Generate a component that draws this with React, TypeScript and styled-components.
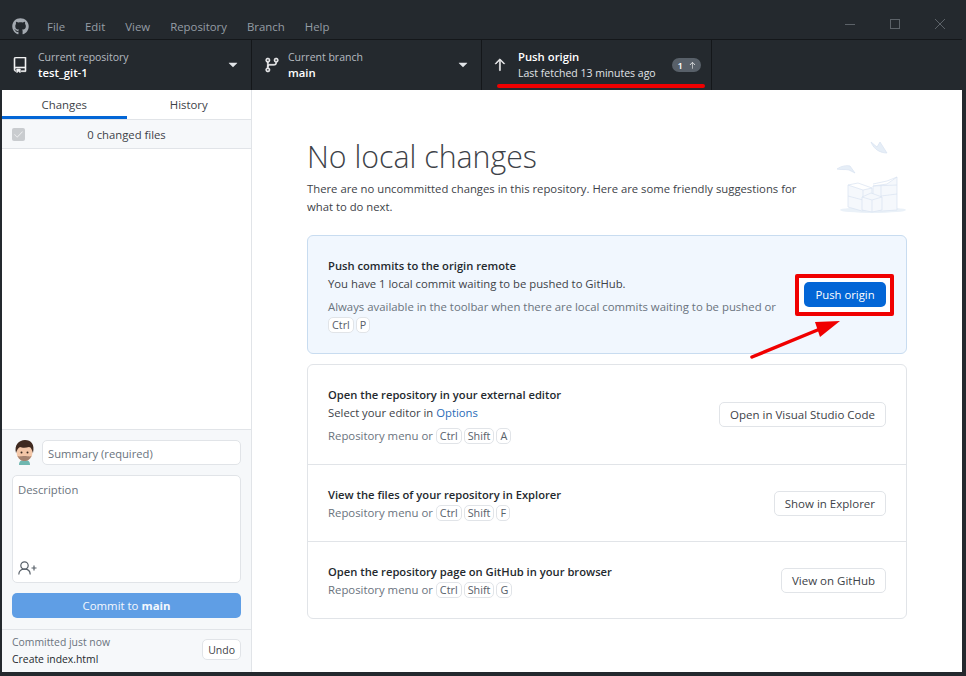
import React from 'react';
import styled, { createGlobalStyle } from 'styled-components';
import { FaGithub } from 'react-icons/fa';
import { GoRepo, GoGitBranch, GoArrowUp, GoTriangleDown, GoCheck } from 'react-icons/go';

const GlobalStyle = createGlobalStyle`
  html, body {
    margin: 0;
    padding: 0;
    width: 966px;
    height: 676px;
    overflow: hidden;
    background: #24292e;
  }
  * { box-sizing: border-box; }
  body {
    font-family: "Open Sans", "Noto Sans", sans-serif;
    font-size: 11.3px;
    color: #24292e;
  }
`;

const Window = styled.div`
  width: 966px;
  height: 676px;
  display: flex;
  flex-direction: column;
  padding: 0 4px 4px 2px;
  background: #24292e;
`;

const TitleBar = styled.header`
  height: 40px;
  margin-left: -2px;
  flex: none;
  display: flex;
  align-items: flex-end;
  border-bottom: 1px solid #14171a;
  padding: 0 0 2px 12px;
  color: #959da5;
`;

const Logo = styled(FaGithub)`
  width: 17px;
  height: 17px;
  color: #a3a9b0;
  margin-bottom: 2px;
`;

const Menu = styled.nav`
  display: flex;
  margin-left: 18px;
  gap: 20px;
  font-size: 11.4px;
  line-height: 20px;
`;

const WindowControls = styled.div`
  margin-left: auto;
  display: flex;
  align-items: center;
  gap: 33px;
  padding: 0 16px 6px 0;
  height: 20px;
`;

const ControlIcon = styled.svg`
  width: 12px;
  height: 12px;
  stroke: #5c6268;
  fill: none;
  display: block;
`;

const Toolbar = styled.div`
  height: 50px;
  flex: none;
  display: flex;
  margin-left: -2px;
`;

const ToolbarItem = styled.div<{ $width: number }>`
  position: relative;
  width: ${({ $width }) => $width}px;
  display: flex;
  align-items: center;
  padding: 0 10px 0 12px;
  border-right: 1px solid #14171a;
  color: #fff;
`;

const ToolbarIcon = styled.span<{ $gap: number; $lead?: number }>`
  display: flex;
  font-size: 16px;
  margin-left: ${({ $lead }) => $lead ?? 0}px;
  margin-right: ${({ $gap }) => $gap}px;
  color: #f1f2f3;
  svg { stroke: currentColor; stroke-width: 0.9; }
`;

const ToolbarText = styled.div`
  flex: 1;
  display: flex;
  flex-direction: column;
  line-height: 16px;
`;

const ToolbarLabel = styled.span<{ $bright?: boolean }>`
  font-size: 10.5px;
  color: ${({ $bright }) => ($bright ? '#e1e4e8' : '#b5bac0')};
`;

const ToolbarValue = styled.span`
  font-size: 11.3px;
  font-weight: 600;
  color: #fff;
`;

const Caret = styled(GoTriangleDown)`
  color: #e1e4e8;
  font-size: 16px;
`;

const AheadBadge = styled.span`
  display: flex;
  align-items: center;
  gap: 5px;
  height: 14px;
  padding: 0 4px 0 6px;
  border-radius: 7px;
  background: #586069;
  font-size: 9.5px;
  font-weight: 600;
  color: #fff;
  svg { width: 9px; height: 9px; }
`;

const RedUnderline = styled.span`
  position: absolute;
  left: 15px;
  right: 6px;
  bottom: 2px;
  height: 4px;
  border-radius: 2px;
  background: #f00000;
`;

const Body = styled.div`
  flex: 1;
  min-height: 0;
  display: flex;
  background: #fff;
`;

const Sidebar = styled.aside`
  width: 250px;
  flex: none;
  display: flex;
  flex-direction: column;
  border-right: 1px solid #e1e4e8;
`;

const Tabs = styled.div`
  display: flex;
  height: 30px;
  flex: none;
  border-bottom: 1px solid #e1e4e8;
`;

const Tab = styled.div<{ $active?: boolean }>`
  flex: 1;
  display: flex;
  align-items: center;
  justify-content: center;
  font-size: 11.4px;
  color: #3d4248;
  box-shadow: ${({ $active }) => ($active ? 'inset 0 -3px 0 #0366d6' : 'none')};
`;

const ChangedRow = styled.div`
  height: 29px;
  flex: none;
  position: relative;
  display: flex;
  align-items: center;
  justify-content: center;
  background: #f6f8fa;
  border-bottom: 1px solid #e1e4e8;
  color: #3d4248;
`;

const DisabledCheck = styled.span`
  position: absolute;
  left: 10px;
  top: 8px;
  width: 13px;
  height: 13px;
  border-radius: 2px;
  background: #c9cccf;
  color: #f2f3f4;
  display: flex;
  align-items: center;
  justify-content: center;
`;

const FileList = styled.div`
  flex: 1;
`;

const CommitArea = styled.div`
  flex: none;
  height: 200px;
  padding: 10px 10px 10px;
  background: #f6f8fa;
  border-top: 1px solid #e1e4e8;
  display: flex;
  flex-direction: column;
`;

const SummaryRow = styled.div`
  display: flex;
  align-items: center;
  gap: 5px;
  height: 25px;
  margin-bottom: 10px;
`;

const Avatar = styled.svg`
  width: 25px;
  height: 25px;
  flex: none;
`;

const SummaryInput = styled.div`
  flex: 1;
  height: 25px;
  display: flex;
  align-items: center;
  padding: 1px 5px 0;
  background: #fff;
  border: 1px solid #e1e4e8;
  border-radius: 5px;
  font-size: 11.2px;
  color: #6a737d;
`;

const DescriptionBox = styled.div`
  height: 108px;
  flex: none;
  padding: 6px 5px 7px;
  background: #fff;
  border: 1px solid #e1e4e8;
  border-radius: 5px;
  color: #6a737d;
  display: flex;
  flex-direction: column;
  justify-content: space-between;
`;

const CoAuthorIcon = styled.svg`
  width: 19px;
  height: 14px;
  stroke: #586069;
  stroke-width: 1.2;
  fill: none;
`;

const CommitButton = styled.div`
  height: 25px;
  margin-top: 10px;
  flex: none;
  display: flex;
  align-items: center;
  justify-content: center;
  gap: 3px;
  border-radius: 5px;
  background: #5f9ee5;
  color: #f4f8fd;
  font-size: 11.4px;
  b { font-weight: 700; }
`;

const LastCommit = styled.div`
  flex: none;
  height: 43px;
  background: #f6f8fa;
  border-top: 1px solid #e1e4e8;
  padding: 0 10px;
  display: flex;
  align-items: center;
  justify-content: space-between;
`;

const LastCommitText = styled.div`
  display: flex;
  flex-direction: column;
  font-size: 10.4px;
  line-height: 17px;
`;

const Muted = styled.span`
  color: #6a737d;
`;

const SmallButton = styled.div`
  height: 21px;
  padding: 0 5px;
  margin-top: -3px;
  display: flex;
  align-items: center;
  background: #fff;
  border: 1px solid #e1e4e8;
  border-radius: 5px;
  font-size: 10.5px;
  color: #3d4248;
`;

const Main = styled.main`
  position: relative;
  flex: 1;
  min-width: 0;
  padding: 45px 55px 0 55px;
`;

const Heading = styled.div`
  display: flex;
  justify-content: space-between;
  height: 100px;
`;

const Title = styled.h1`
  margin: 0 0 1px;
  font-size: 30.3px;
  line-height: 44px;
  font-weight: 300;
  color: #3d4248;
`;

const Lead = styled.p`
  margin: 0;
  width: 505px;
  line-height: 18px;
  color: #3d4248;
`;

const Illustration = styled.svg`
  width: 72px;
  height: 76px;
  margin-top: 5px;
`;

const PushCard = styled.section`
  height: 119px;
  display: flex;
  align-items: center;
  justify-content: space-between;
  padding: 0 12px 0 20px;
  background: #f1f7fe;
  border: 1px solid #c8dcf0;
  border-radius: 6px;
`;

const CardGroup = styled.section`
  margin-top: 10px;
  border: 1px solid #e1e4e8;
  border-radius: 6px;
`;

const Row = styled.div<{ $height: number }>`
  height: ${({ $height }) => $height}px;
  display: flex;
  align-items: center;
  justify-content: space-between;
  padding: 0 20px;
  & + & { border-top: 1px solid #e1e4e8; }
`;

const RowText = styled.div`
  line-height: 18px;
  margin-top: 2px;
`;

const RowTitle = styled.div`
  font-weight: 600;
  font-size: 11.2px;
  color: #24292e;
`;

const RowBody = styled.div`
  color: #3d4248;
`;

const Hint = styled.div<{ $spaced?: boolean }>`
  margin-top: ${({ $spaced }) => ($spaced ? 5 : 0)}px;
  color: #6a737d;
  max-width: 455px;
  font-size: 11.37px;
  line-height: 18px;
`;

const Link = styled.span`
  color: #2a6bb8;
`;

const Kbd = styled.kbd`
  display: inline-block;
  margin-right: 2px;
  padding: 0 3px;
  line-height: 14px;
  font-family: inherit;
  font-size: 10.8px;
  color: #586069;
  background: #fff;
  border: 1px solid #e1e4e8;
  border-radius: 5px;
`;

const ActionButton = styled.div`
  height: 25px;
  padding: 0 10px;
  display: flex;
  align-items: center;
  flex: none;
  white-space: nowrap;
  font-size: 11.5px;
  background: #fff;
  border: 1px solid #e1e4e8;
  border-radius: 5px;
  color: #3d4248;
`;

const HighlightFrame = styled.div`
  flex: none;
  border: 4px solid #f00000;
  border-radius: 2px;
  padding: 4px 4px 5px 5px;
  background: #fff;
`;

const PrimaryButton = styled.div`
  width: 82px;
  height: 25px;
  padding-top: 1px;
  display: flex;
  align-items: center;
  justify-content: center;
  white-space: nowrap;
  background: #0366d6;
  border-radius: 5px;
  color: #fff;
`;

const ArrowOverlay = styled.svg`
  position: absolute;
  left: 498px;
  top: 228px;
  width: 92px;
  height: 42px;
`;

const Keys: React.FC<{ keys: string[] }> = ({ keys }) => (
  <>
    {keys.map(k => (
      <Kbd key={k}>{k}</Kbd>
    ))}
  </>
);

const rows = [
  {
    title: 'Open the repository in your external editor',
    keys: ['Ctrl', 'Shift', 'A'],
    action: 'Open in Visual Studio Code',
    height: 99,
  },
  {
    title: 'View the files of your repository in Explorer',
    keys: ['Ctrl', 'Shift', 'F'],
    action: 'Show in Explorer',
    height: 77,
  },
  {
    title: 'Open the repository page on GitHub in your browser',
    keys: ['Ctrl', 'Shift', 'G'],
    action: 'View on GitHub',
    height: 77,
  },
];

const App: React.FC = () => (
  <Window>
    <GlobalStyle />
    <TitleBar>
      <Logo />
      <Menu>
        <span>File</span>
        <span>Edit</span>
        <span>View</span>
        <span>Repository</span>
        <span>Branch</span>
        <span>Help</span>
      </Menu>
      <WindowControls>
        <ControlIcon viewBox="0 0 12 12"><path d="M1 6.500h10" /></ControlIcon>
        <ControlIcon viewBox="0 0 12 12"><rect x="1.500" y="1.500" width="9" height="9" /></ControlIcon>
        <ControlIcon viewBox="0 0 12 12"><path d="M1 1l10 10M11 1L1 11" /></ControlIcon>
      </WindowControls>
    </TitleBar>
    <Toolbar>
      <ToolbarItem $width={252}>
        <ToolbarIcon $gap={10}><GoRepo /></ToolbarIcon>
        <ToolbarText>
          <ToolbarLabel>Current repository</ToolbarLabel>
          <ToolbarValue>test_git-1</ToolbarValue>
        </ToolbarText>
        <Caret />
      </ToolbarItem>
      <ToolbarItem $width={230}>
        <ToolbarIcon $gap={8}><GoGitBranch /></ToolbarIcon>
        <ToolbarText>
          <ToolbarLabel>Current branch</ToolbarLabel>
          <ToolbarValue>main</ToolbarValue>
        </ToolbarText>
        <Caret />
      </ToolbarItem>
      <ToolbarItem $width={230}>
        <ToolbarIcon $gap={10} $lead={-2}><GoArrowUp /></ToolbarIcon>
        <ToolbarText>
          <ToolbarValue>Push origin</ToolbarValue>
          <ToolbarLabel $bright>Last fetched 13 minutes ago</ToolbarLabel>
        </ToolbarText>
        <AheadBadge>1<GoArrowUp /></AheadBadge>
        <RedUnderline />
      </ToolbarItem>
    </Toolbar>
    <Body>
      <Sidebar>
        <Tabs>
          <Tab $active>Changes</Tab>
          <Tab>History</Tab>
        </Tabs>
        <ChangedRow>
          <DisabledCheck><GoCheck size={11} /></DisabledCheck>
          0 changed files
        </ChangedRow>
        <FileList />
        <CommitArea>
          <SummaryRow>
            <Avatar viewBox="0 0 25 25">
              <path d="M7 25c0-4 2-5 5.500-5s5.500 1 5.500 5z" fill="#6fb7b0" />
              <ellipse cx="12.500" cy="12.500" rx="8" ry="8.500" fill="#f3c7a8" />
              <path d="M5.500 16c2 4 4 5 7 5s5-1 7-5c-2 1-4 0-7 0s-5 1-7 0z" fill="#a5836f" />
              <path d="M4 13C2 5 7 0 13 0s10 4 8 13c-1-3-2-6-4-6-3 1-7 1-9 0-2 1-3 3-4 6z" fill="#3f2a20" />
              <circle cx="9.500" cy="12.500" r="1" fill="#3a2a20" />
              <circle cx="15.500" cy="12.500" r="1" fill="#3a2a20" />
            </Avatar>
            <SummaryInput>Summary (required)</SummaryInput>
          </SummaryRow>
          <DescriptionBox>
            <span>Description</span>
            <CoAuthorIcon viewBox="0 0 19 14">
              <circle cx="6.500" cy="4.500" r="3.700" />
              <path d="M0.800 13.500c0-3.500 2.500-5.300 5.700-5.300s5.700 1.800 5.700 5.300" />
              <path d="M13.500 7h5M16 4.500v5" />
            </CoAuthorIcon>
          </DescriptionBox>
          <CommitButton>Commit to <b>main</b></CommitButton>
        </CommitArea>
        <LastCommit>
          <LastCommitText>
            <Muted>Committed just now</Muted>
            <span>Create index.html</span>
          </LastCommitText>
          <SmallButton>Undo</SmallButton>
        </LastCommit>
      </Sidebar>
      <Main>
        <Heading>
          <div>
            <Title>No local changes</Title>
            <Lead>There are no uncommitted changes in this repository. Here are some friendly suggestions for what to do next.</Lead>
          </div>
          <Illustration viewBox="0 0 72 76" fill="#f5f8fc" stroke="#d8e3f0" strokeWidth="0.7">
            <ellipse cx="38" cy="70" rx="33" ry="3" fill="#eaf1f8" stroke="none" />
            <path d="M36 2l6 5 3-5 7 11c-6 0-13-3-16-11z" fill="#e6eef7" />
            <path d="M2 29c4-3 10-4 13-3l5 7-6-3c-4-1-8 0-12-1z" fill="#e6eef7" />
            <path d="M13 45l15 5 9-2v22l-10 1-14-4z" />
            <path d="M13 45l10-2 14 5M28 50v21M13 56l15 4" fill="none" />
            <path d="M38 46l14-2 10-7v33l-15 1-9-1z" />
            <path d="M38 46l24-1M46 45v25M46 56l16-2M38 44l14-3 10-4" fill="none" />
            <path d="M27 57l9-4 11 4v13l-10 2-10-2z" />
            <path d="M27 57l10 3 10-3M37 60v12" fill="none" />
          </Illustration>
        </Heading>
        <PushCard>
          <RowText>
            <RowTitle>Push commits to the origin remote</RowTitle>
            <RowBody>You have 1 local commit waiting to be pushed to GitHub.</RowBody>
            <Hint $spaced>
              Always available in the toolbar when there are local commits waiting to be pushed or{' '}
              <Keys keys={['Ctrl', 'P']} />
            </Hint>
          </RowText>
          <HighlightFrame>
            <PrimaryButton>Push origin</PrimaryButton>
          </HighlightFrame>
        </PushCard>
        <CardGroup>
          {rows.map(row => {
            const hasEditor = row.action.startsWith('Open');
            return (
              <Row key={row.action} $height={row.height}>
                <RowText>
                  <RowTitle>{row.title}</RowTitle>
                  {hasEditor && (
                    <RowBody>Select your editor in <Link>Options</Link></RowBody>
                  )}
                  <Hint $spaced={hasEditor}>
                    Repository menu or <Keys keys={row.keys} />
                  </Hint>
                </RowText>
                <ActionButton>{row.action}</ActionButton>
              </Row>
            );
          })}
        </CardGroup>
        <ArrowOverlay viewBox="0 0 92 42">
          <path d="M2 39L70 11" stroke="#f00000" strokeWidth="3.500" strokeLinecap="round" />
          <path d="M65 4L90 3 70 19z" fill="#f00000" />
        </ArrowOverlay>
      </Main>
    </Body>
  </Window>
);

export default App;
